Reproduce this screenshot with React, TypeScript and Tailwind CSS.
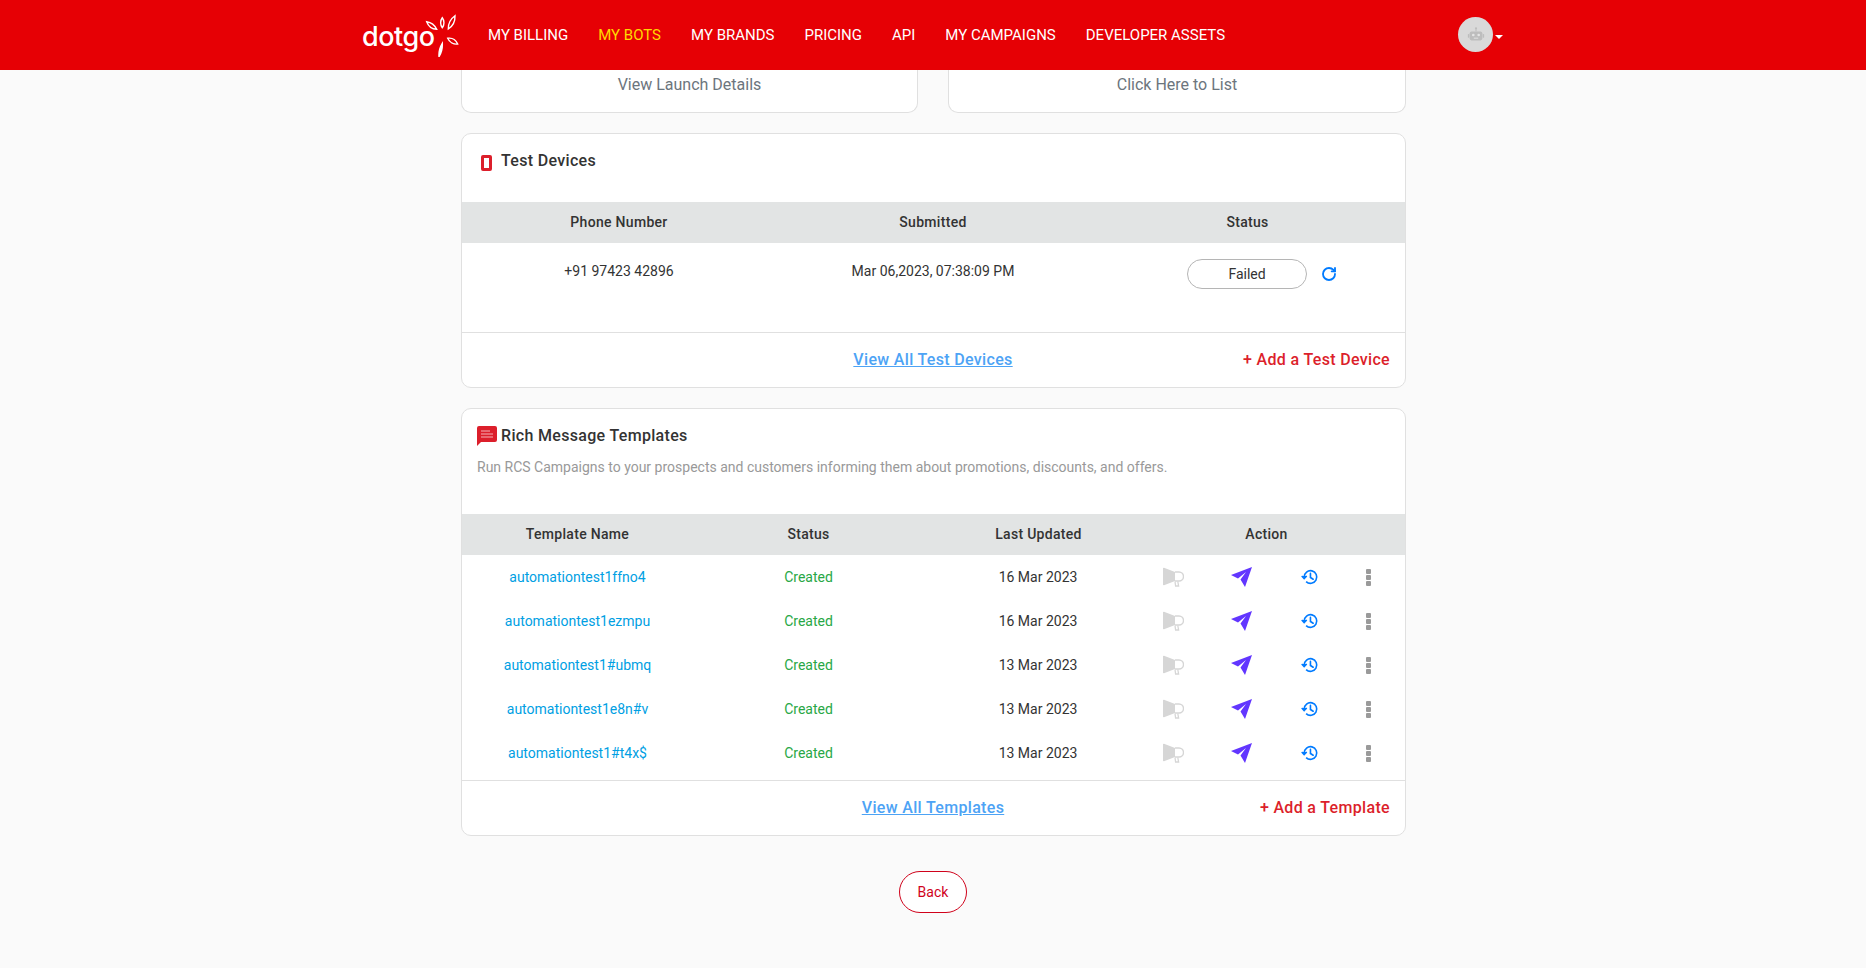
import { RotateCw } from "lucide-react";

const navItems = ["MY BILLING", "MY BOTS", "MY BRANDS", "PRICING", "API", "MY CAMPAIGNS", "DEVELOPER ASSETS"];

const templates = [
  { name: "automationtest1ffno4", date: "16 Mar 2023" },
  { name: "automationtest1ezmpu", date: "16 Mar 2023" },
  { name: "automationtest1#ubmq", date: "13 Mar 2023" },
  { name: "automationtest1e8n#v", date: "13 Mar 2023" },
  { name: "automationtest1#t4x$", date: "13 Mar 2023" },
];

function Logo() {
  return (
    <div className="relative w-[96px] h-[44px]">
      <span className="absolute left-0 top-[7px] text-[27px] leading-[34px] font-medium text-white tracking-[-0.5px] font-['Inter',sans-serif]">dotgo</span>
      <svg viewBox="0 0 34 44" className="absolute left-[63px] top-0 w-[34px] h-[44px]" fill="none" stroke="#fff" strokeWidth="1.4">
        <path d="M1.7 8.7c4 .6 8 3.4 10 7.6-4.4-.2-8.4-3.2-10-7.6z" />
        <path d="M17.3 4.7c2.2 2.8 2.2 7.2 0 10-2.2-2.8-2.2-7.2 0-10z" />
        <path d="M30 2.7c.2 5-2 10.2-6.7 13.3-.2-5 2.4-10.2 6.7-13.3z" />
        <path d="M22.7 25.3c4-.6 8 1.6 10 5.7-4 .6-8.2-1.6-10-5.7z" />
        <path d="M17.3 30.3c.3 4.6-.8 9.4-3.3 13.4-.3-4.6.8-9.4 3.3-13.4z" fill="#fff" />
      </svg>
    </div>
  );
}

function BotAvatar() {
  return (
    <div className="w-[35px] h-[35px] rounded-full bg-[#d9d9d9] flex items-center justify-center">
      <svg viewBox="0 0 20 20" className="w-[18px] h-[18px]" fill="#bdbdbd">
        <rect x="3" y="6" width="14" height="10" rx="2" />
        <rect x="1" y="9" width="1.6" height="4" />
        <rect x="17.4" y="9" width="1.6" height="4" />
        <rect x="9.4" y="2.5" width="1.2" height="3.5" />
        <circle cx="10" cy="2.5" r="1.2" />
        <circle cx="7" cy="10" r="1.5" fill="#e4e4e4" />
        <circle cx="13" cy="10" r="1.5" fill="#e4e4e4" />
        <rect x="7.5" y="13" width="5" height="1" fill="#e4e4e4" />
      </svg>
    </div>
  );
}

function Megaphone() {
  return (
    <svg viewBox="0 0 22 20" className="w-[22px] h-[20px]">
      <path d="M1 1l1-.3 11 4.3V14L2 18.3 1 18z" fill="#d6d6d6" />
      <path d="M13 5h4a4.5 4.5 0 0 1 0 9h-4" fill="none" stroke="#d6d6d6" strokeWidth="1.4" />
      <path d="M13 14.5l.6 4.5h3l-.8-4.5" fill="none" stroke="#d6d6d6" strokeWidth="1.3" />
    </svg>
  );
}

function Send() {
  return (
    <svg viewBox="0 0 22 20" className="w-[22px] h-[20px]">
      <path d="M21 0L0 8l7 3.5L15 5l-5.5 7.5L14 20z" fill="#6236ff" />
    </svg>
  );
}

function History() {
  return (
    <svg viewBox="0 0 20 20" className="w-[18px] h-[18px]" fill="none" stroke="#007bff" strokeWidth="1.8">
      <path d="M3.5 10a7 7 0 1 1 2.2 5.1" />
      <path d="M0.8 8.8l2.7 3 2.9-3" strokeWidth="1.6" fill="#007bff" />
      <path d="M10.5 6v4.5l3 2" strokeLinecap="round" />
    </svg>
  );
}

function Kebab() {
  return (
    <div className="flex flex-col gap-[1px]">
      <span className="w-[5px] h-[5px] rounded-[1px] bg-[#9a9a9a]" />
      <span className="w-[5px] h-[5px] rounded-[1px] bg-[#9a9a9a]" />
      <span className="w-[5px] h-[5px] rounded-[1px] bg-[#9a9a9a]" />
    </div>
  );
}

export default function App() {
  return (
    <div className="min-h-[968px] bg-[#fafafa] font-['Roboto',sans-serif] text-[14px] text-[#333]">
      {/* Header */}
      <header className="h-[70px] bg-[#e60005] flex items-center pl-[362px]">
        <Logo />
        <nav className="flex items-center gap-[30px] ml-[30px] text-[15px] text-white">
          {navItems.map((item) => (
            <span key={item} className={item === "MY BOTS" ? "text-[#ffd800]" : ""}>{item}</span>
          ))}
        </nav>
        <div className="flex items-center ml-[233px] mt-[-1px]">
          <BotAvatar />
          <span className="ml-[2px] mt-[5px] w-0 h-0 border-x-[4px] border-x-transparent border-t-[4px] border-t-white" />
        </div>
      </header>

      <main className="w-[945px] ml-[461px]">
        {/* Top cards, scrolled under the header */}
        <div className="flex gap-[30px]">
          <div className="w-[457px] h-[43px] bg-white border border-t-0 border-[#e0e0e0] rounded-b-[10px] flex items-center justify-center text-[16px] text-[#6c757d] pb-[13px]">
            View Launch Details
          </div>
          <div className="w-[458px] h-[43px] bg-white border border-t-0 border-[#e0e0e0] rounded-b-[10px] flex items-center justify-center text-[16px] text-[#6c757d] pb-[13px]">
            Click Here to List
          </div>
        </div>

        {/* Test Devices */}
        <section className="mt-[20px] h-[255px] bg-white border border-[#e0e0e0] rounded-[10px] overflow-hidden flex flex-col">
          <div className="h-[68px] shrink-0 flex items-start pl-[19px] pt-[17px]">
            <span className="mt-[4px] w-[11px] h-[16px] border-[3px] border-[#dc1f2b] rounded-[2px]" />
            <h2 className="ml-[9px] text-[16px] leading-[20px] font-medium tracking-[0.32px] text-[#333]">Test Devices</h2>
          </div>
          <div className="h-[41px] shrink-0 bg-[#e2e4e4] grid grid-cols-[314px_314px_1fr] items-center text-center font-medium tracking-[0.3px]">
            <span>Phone Number</span>
            <span>Submitted</span>
            <span>Status</span>
          </div>
          <div className="h-[90px] shrink-0 grid grid-cols-[314px_314px_1fr] items-start text-center border-b border-[#e0e0e0]">
            <span className="mt-[18px]">+91 97423 42896</span>
            <span className="mt-[18px]">Mar 06,2023, 07:38:09 PM</span>
            <div className="mt-[16px] flex items-center pl-[97px]">
              <span className="w-[120px] h-[30px] rounded-full border border-[#b5b5b5] flex items-center justify-center">Failed</span>
              <RotateCw className="ml-[14px] w-[16px] h-[16px] text-[#007bff]" strokeWidth={2.8} />
            </div>
          </div>
          <div className="relative flex-1 flex items-center justify-center pr-[1px]">
            <a className="text-[16px] font-medium tracking-[0.33px] text-[#4da3f5] underline">View All Test Devices</a>
            <span className="absolute right-[15px] text-[16px] font-medium tracking-[0.33px] text-[#dc1f2b]">+ Add a Test Device</span>
          </div>
        </section>

        {/* Rich Message Templates */}
        <section className="mt-[20px] h-[428px] bg-white border border-[#e0e0e0] rounded-[10px] overflow-hidden flex flex-col">
          <div className="h-[105px] shrink-0 pl-[15px] pt-[17px]">
            <div className="flex items-center">
              <svg viewBox="0 0 20 20" className="w-[20px] h-[20px]">
                <path d="M2 0h16a2 2 0 0 1 2 2v12a2 2 0 0 1-2 2H4l-4 4V2a2 2 0 0 1 2-2z" fill="#dc1f2b" />
                <path d="M4 5h9M4 8h12M4 11h12" stroke="#f6b3b7" strokeWidth="1" />
              </svg>
              <h2 className="ml-[4px] text-[16px] leading-[20px] font-medium tracking-[0.32px] text-[#333]">Rich Message Templates</h2>
            </div>
            <p className="mt-[11px] text-[#999]">Run RCS Campaigns to your prospects and customers informing them about promotions, discounts, and offers.</p>
          </div>
          <div className="h-[41px] shrink-0 bg-[#e2e4e4] grid grid-cols-[231px_231px_229px_1fr] items-center text-center font-medium tracking-[0.3px]">
            <span>Template Name</span>
            <span>Status</span>
            <span>Last Updated</span>
            <span className="pr-[25px]">Action</span>
          </div>
          <div className="h-[226px] shrink-0 border-b border-[#e0e0e0]">
            {templates.map((t) => (
              <div key={t.name} className="h-[44px] grid grid-cols-[231px_231px_229px_1fr] items-center text-center">
                <span className="text-[#00a0e3]">{t.name}</span>
                <span className="text-[#28a745]">Created</span>
                <span className="pr-[1px]">{t.date}</span>
                <div className="flex items-center pl-[9px]">
                  <Megaphone />
                  <div className="ml-[47px]"><Send /></div>
                  <div className="ml-[48px]"><History /></div>
                  <div className="ml-[47px]"><Kebab /></div>
                </div>
              </div>
            ))}
          </div>
          <div className="relative flex-1 flex items-center justify-center pr-[1px]">
            <a className="text-[16px] font-medium tracking-[0.33px] text-[#4da3f5] underline">View All Templates</a>
            <span className="absolute right-[15px] text-[16px] font-medium tracking-[0.33px] text-[#dc1f2b]">+ Add a Template</span>
          </div>
        </section>

        {/* Back */}
        <div className="mt-[35px] flex justify-center pr-[1px]">
          <button className="w-[68px] h-[42px] rounded-full border border-[#d0021b] bg-white text-[#d0021b]">Back</button>
        </div>
      </main>
    </div>
  );
}
